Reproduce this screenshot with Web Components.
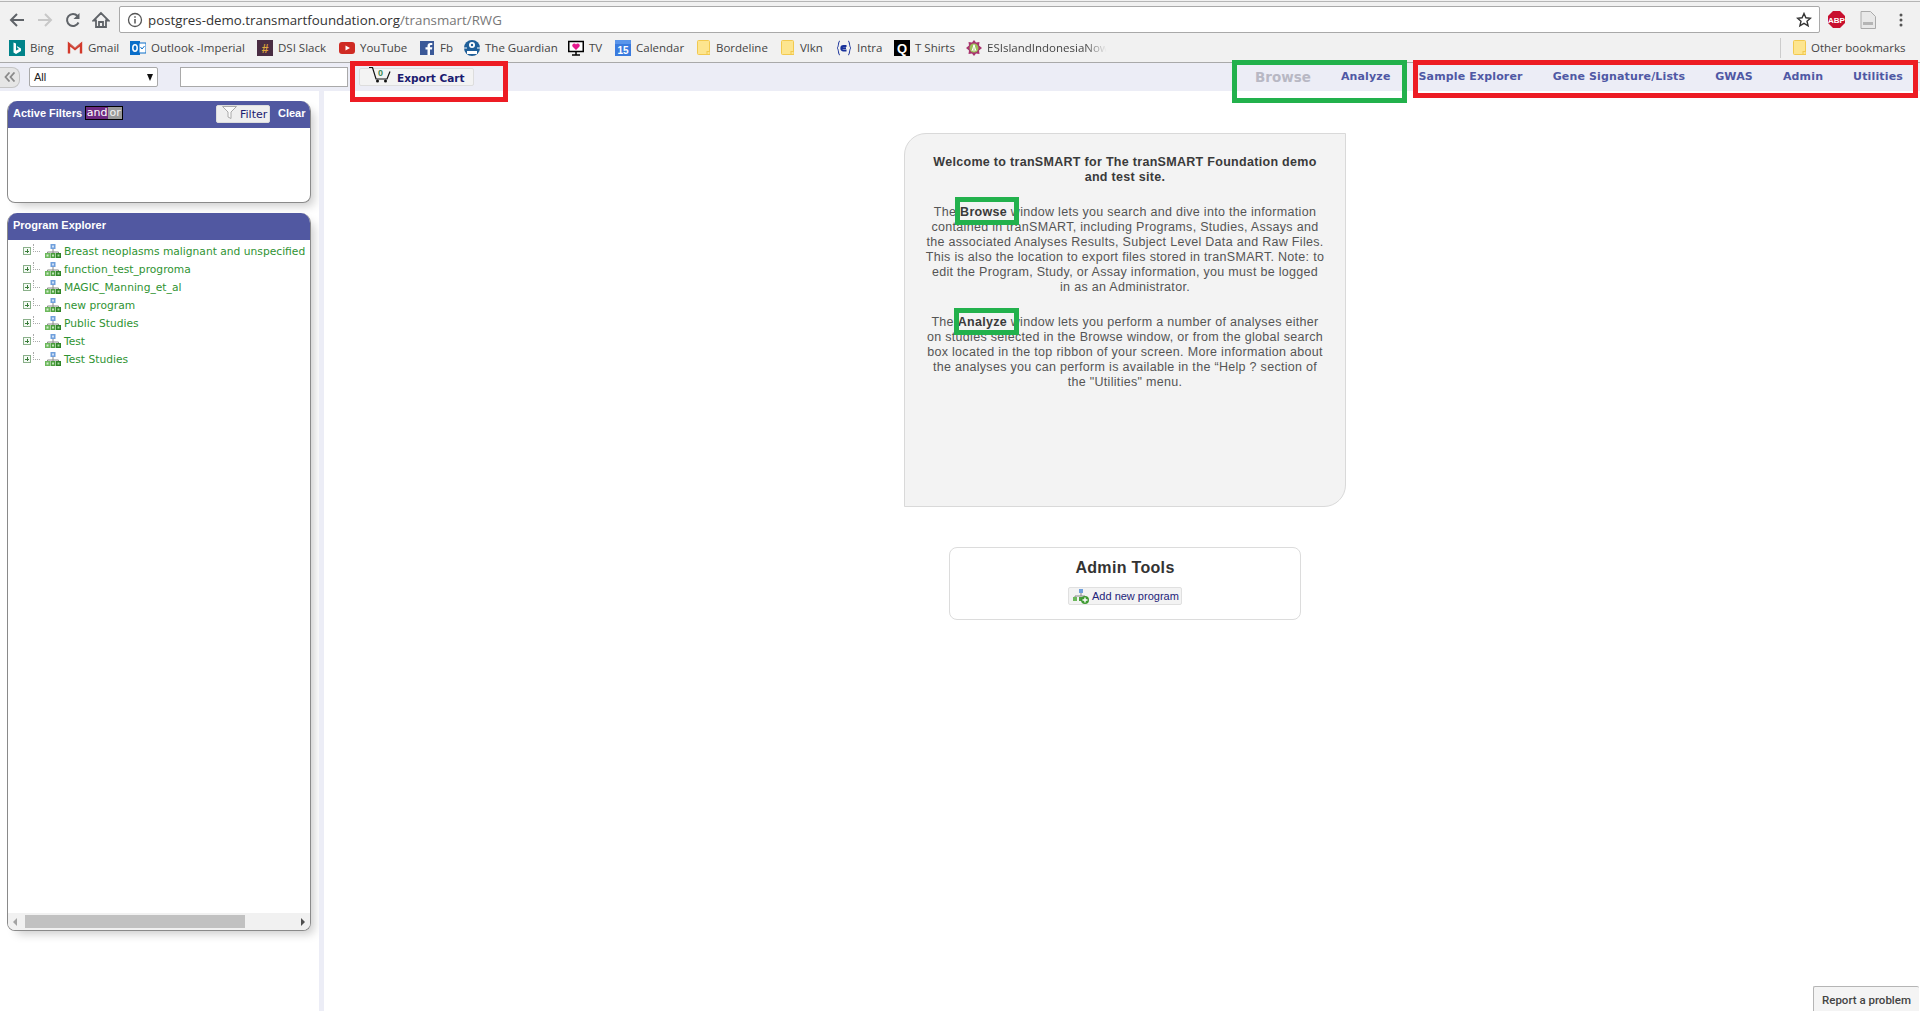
<!DOCTYPE html>
<html>
<head>
<meta charset="utf-8">
<title>tranSMART</title>
<style>
  html, body { margin: 0; padding: 0; background: #fff; }
  body { width: 1926px; height: 1011px; overflow: hidden; font-family: "Liberation Sans", Arial, sans-serif; }
  svg { display: block; }
</style>
</head>
<body>
<app-page></app-page>

<script>
// small helper, every element just renders a string into its open shadow root
class Base extends HTMLElement {
  constructor() {
    super();
    this.attachShadow({ mode: 'open' });
    this.shadowRoot.innerHTML = this.render();
  }
  render() { return '<slot></slot>'; }
}

const hierarchy = `
<svg width="16" height="14" viewBox="0 0 16 14">
  <rect x="5.5" y="0" width="5" height="5" fill="#6f9fdc"/><rect x="7" y="1.500" width="2" height="2" fill="#cfe0f5"/>
  <path d="M8 5v3M2.500 9.500v-1.500h11v1.500M8 8v1.500" stroke="#888" fill="none"/>
  <rect x="0" y="9" width="5" height="5" fill="#6cb85c"/><rect x="1.500" y="10.500" width="2" height="2" fill="#d5edcf"/>
  <rect x="5.500" y="9" width="5" height="5" fill="#4a9e3c"/><rect x="7" y="10.500" width="2" height="2" fill="#c4e6bc"/>
  <rect x="11" y="9" width="5" height="5" fill="#2f8427"/><rect x="12.500" y="10.500" width="2" height="2" fill="#a8d8a0"/>
</svg>`;

class BookmarkItem extends Base {
  render() {
    return `<style>
      :host { display: flex; align-items: center; gap: 5px; flex: none; height: 29px; }
      .ic { width: 16px; height: 16px; flex: none; display: flex; justify-content: center; }
      span { font: 11.500px "Open Sans", sans-serif; color: #444; white-space: nowrap; }
    </style>
    <div class="ic"><slot name="icon"></slot></div><span><slot></slot></span>`;
  }
}
customElements.define('bookmark-item', BookmarkItem);

const folder = `<svg slot="icon" width="13" height="16" viewBox="0 0 13 16"><path d="M.5 1.500a1 1 0 0 1 1-1h10a1 1 0 0 1 1 1v13h-11a1 1 0 0 1-1-1z" fill="#fde58f" stroke="#f2c94f"/><rect x="10" y="11.500" width="3" height="3" fill="#fde58f" stroke="#f2c94f"/></svg>`;

class BrowserChrome extends Base {
  render() {
    return `<style>
      :host { display: block; background: #f1f1f1; }
      .tabs { height: 6px; box-sizing: border-box; padding-top: 1px; }
      .tabs div { height: 1px; background: #b5b5b5; }
      .top { display: flex; align-items: center; height: 27px; }
      .navs { width: 119px; flex: none; display: flex; align-items: center; padding-left: 8px; box-sizing: border-box; gap: 10px; }
      .url { flex: none; width: 1701px; height: 27px; box-sizing: border-box; background: #fff; border: 1px solid #a9a9a9; border-radius: 2px;
             display: flex; align-items: center; padding: 0 7px 0 7px; gap: 5px; font: 13.300px "Open Sans", sans-serif; color: #777; }
      .url b { font-weight: 400; color: #333; }
      .url .txt { flex: 1; white-space: nowrap; }
      .right { flex: 1; display: flex; align-items: center; padding-left: 8px; gap: 15px; }
      .marks { height: 29px; display: flex; align-items: center; padding-left: 9px; box-sizing: border-box; }
      .fade { color: #444; -webkit-mask-image: linear-gradient(to right, #000 80%, transparent 98%); mask-image: linear-gradient(to right, #000 80%, transparent 98%); }
      .sep { width: 1px; height: 20px; background: #ccc; flex: none; }
    </style>
    <div class="tabs"><div></div></div>
    <div class="top">
      <div class="navs">
        <svg width="18" height="18" viewBox="0 0 18 18"><path d="M16 9H3M9 3 3 9l6 6" stroke="#5f6368" stroke-width="2" fill="none"/></svg>
        <svg width="18" height="18" viewBox="0 0 18 18"><path d="M2 9h13M9 3l6 6-6 6" stroke="#c8c8c8" stroke-width="2" fill="none"/></svg>
        <svg width="18" height="18" viewBox="0 0 18 18"><path d="M14.500 11.500A6 6 0 1 1 13.500 5" stroke="#5f6368" stroke-width="2" fill="none"/><path d="M15.500 2v6h-6z" fill="#5f6368"/></svg>
        <svg width="18" height="18" viewBox="0 0 18 18"><path d="M9 2 1.500 9.500H4V16h10V9.500h2.500zM7 15.500V11h4v4.500" stroke="#5f6368" stroke-width="1.800" fill="none"/></svg>
      </div>
      <div class="url">
        <svg width="16" height="16" viewBox="0 0 16 16"><circle cx="8" cy="8" r="6.500" stroke="#555" stroke-width="1.300" fill="none"/><path d="M8 7v4.500M8 4.200v1.500" stroke="#555" stroke-width="1.500"/></svg>
        <span class="txt"><b>postgres-demo.transmartfoundation.org</b>/transmart/RWG</span>
        <svg width="16" height="16" viewBox="0 0 16 16"><path d="m8 1.500 1.900 4.300 4.600.4-3.500 3 1.100 4.600L8 11.400l-4.100 2.400L5 9.200l-3.500-3 4.600-.4z" stroke="#333" stroke-width="1.400" fill="none"/></svg>
      </div>
      <div class="right">
        <svg width="17" height="17" viewBox="0 0 17 17"><path d="M5 0h7l5 5v7l-5 5H5l-5-5V5z" fill="#c8102e"/><text x="8.500" y="11.500" font-family="Liberation Sans" font-weight="700" font-size="8" fill="#fff" text-anchor="middle">ABP</text></svg>
        <svg width="16" height="18" viewBox="0 0 16 18"><path d="M1 .5h9.500l5 5v12H1z" fill="#e8e8e8" stroke="#aaa"/><path d="M3 11h10v3H3z" fill="#b5b5b5"/></svg>
        <svg width="4" height="14" viewBox="0 0 4 14" style="margin-left:8px"><circle cx="2" cy="2" r="1.500" fill="#555"/><circle cx="2" cy="7" r="1.500" fill="#555"/><circle cx="2" cy="12" r="1.500" fill="#555"/></svg>
      </div>
    </div>
    <div class="marks">
      <bookmark-item style="width:58px"><svg slot="icon" width="16" height="16" viewBox="0 0 16 16"><rect width="16" height="16" fill="#00838a"/><path d="M4.500 2.500 7 3.500v7l3-1.500-1.500-1-.8-2L12 8.500v2.500L7 14l-2.500-1.500z" fill="#fff"/></svg>Bing</bookmark-item>
      <bookmark-item style="width:63px"><svg slot="icon" width="16" height="16" viewBox="0 0 16 16"><path d="M2 13.500V4l6 5 6-5v9.500" stroke="#d3392b" stroke-width="2.400" fill="none"/><path d="M3.200 4 8 8l4.800-4" stroke="#bbb" stroke-width=".5" fill="none"/></svg>Gmail</bookmark-item>
      <bookmark-item style="width:127px"><svg slot="icon" width="16" height="16" viewBox="0 0 16 16"><rect x="0" y="1" width="10" height="14" fill="#0a6ec9"/><rect x="9" y="3" width="7" height="10" fill="#fff" stroke="#0a6ec9"/><path d="m10.500 7 1.500 2 2.500-3" stroke="#0a6ec9" fill="none"/><ellipse cx="5" cy="8" rx="2.200" ry="3.200" stroke="#fff" stroke-width="1.500" fill="none"/></svg>Outlook -Imperial</bookmark-item>
      <bookmark-item style="width:82px"><svg slot="icon" width="16" height="16" viewBox="0 0 16 16"><rect width="16" height="16" fill="#4a2d43"/><text x="8" y="12.500" font-family="Liberation Sans" font-weight="700" font-size="12" fill="#e0a83c" text-anchor="middle">#</text></svg>DSI Slack</bookmark-item>
      <bookmark-item style="width:80px"><svg slot="icon" width="16" height="16" viewBox="0 0 16 16"><rect y="2" width="16" height="12" rx="3" fill="#cf2b24"/><path d="m6.500 5.500 4.500 2.500-4.500 2.500z" fill="#fff"/></svg>YouTube</bookmark-item>
      <bookmark-item style="width:45px"><svg slot="icon" width="16" height="16" viewBox="0 0 16 16"><rect x="1" y="1" width="14" height="14" fill="#3b5998"/><path d="M11 15V9.500h2l.3-2.200H11V6c0-.7.300-1.100 1.100-1.100h1.200V3c-.6-.1-1.200-.1-1.800-.1-1.800 0-3 1-3 3v1.400H6.500v2.200h2V15z" fill="#fff"/></svg>Fb</bookmark-item>
      <bookmark-item style="width:104px"><svg slot="icon" width="16" height="16" viewBox="0 0 16 16"><circle cx="8" cy="8" r="8" fill="#1f5f99"/><circle cx="8" cy="5" r="3" fill="#fff"/><path d="M3 11h10v3H3z" fill="#fff"/><path d="M0 8h3M13 8h3" stroke="#fff"/><circle cx="8" cy="5" r="1.200" fill="#1f5f99"/></svg>The Guardian</bookmark-item>
      <bookmark-item style="width:47px"><svg slot="icon" width="16" height="16" viewBox="0 0 16 16"><rect x=".75" y="1.500" width="14.500" height="10" fill="#fff" stroke="#000" stroke-width="1.500"/><path d="M8 10 4.500 6.500a2 2 0 0 1 3.500-2 2 2 0 0 1 3.500 2z" fill="#e5188d"/><path d="M4 15h8M8 12v3" stroke="#000" stroke-width="1.500"/></svg>TV</bookmark-item>
      <bookmark-item style="width:80px"><svg slot="icon" width="16" height="16" viewBox="0 0 16 16"><rect width="16" height="16" fill="#3a7bde"/><rect y="0" width="16" height="4" fill="#5a95ea"/><text x="8" y="14" font-family="Liberation Sans" font-weight="700" font-size="10" fill="#fff" text-anchor="middle">15</text></svg>Calendar</bookmark-item>
      <bookmark-item style="width:84px">${folder}Bordeline</bookmark-item>
      <bookmark-item style="width:57px">${folder}Vlkn</bookmark-item>
      <bookmark-item style="width:58px"><svg slot="icon" width="16" height="16" viewBox="0 0 16 16"><path d="M4 1C2 1 3 7 1 8c2 1 1 7 3 7M12 1c2 0 1 6 3 7-2 1-1 7-3 7" stroke="#17309a" fill="none"/><path d="M10.500 6h-3a2.200 2.200 0 0 0 0 4.500h3M6 8.200h4" stroke="#17309a" stroke-width="1.800" fill="none"/></svg>Intra</bookmark-item>
      <bookmark-item style="width:72px"><svg slot="icon" width="16" height="16" viewBox="0 0 16 16"><rect width="16" height="16" fill="#000"/><text x="8" y="13" font-family="Liberation Sans" font-weight="700" font-size="13" fill="#fff" text-anchor="middle">Q</text></svg>T Shirts</bookmark-item>
      <bookmark-item style="width:814px"><svg slot="icon" width="16" height="16" viewBox="0 0 16 16"><path d="m8 0 2 2.500L13.500 2 13 5.500 16 8l-3 2.500.5 3.500-3.500-.5L8 16l-2-2.500-3.500.5.500-3.500L0 8l3-2.500L2.500 2 6 2.500z" fill="#a8336e"/><circle cx="8" cy="8" r="4.500" fill="#9bbf5a"/><path d="M8 4.500v7M6 11l2-6 2 6" stroke="#fff" fill="none"/></svg><div class="fade">ESIslandIndonesiaNow</div></bookmark-item>
      <div class="sep"></div>
      <bookmark-item style="margin-left:10px;gap:4px">${folder}Other bookmarks</bookmark-item>
    </div>`;
  }
}
customElements.define('browser-chrome', BrowserChrome);

class NavLink extends Base {
  render() {
    return `<style>
      :host { font: 700 11px "DejaVu Sans", Verdana, sans-serif; letter-spacing: .15px; color: #4f58a4; white-space: nowrap; display: block; }
      :host([off]) { font-size: 13.500px; letter-spacing: 0; color: #b8b8c4; position: relative; top: 1px; }
    </style><slot></slot>`;
  }
}
customElements.define('nav-link', NavLink);

class AppToolbar extends Base {
  render() {
    return `<style>
      :host { display: flex; align-items: center; height: 29px; background: #ecedf6; border-top: 1px solid #a9a9a9; box-sizing: border-box; }
      .collapse { width: 20px; height: 21px; box-sizing: border-box; background: #e6e6e6; border: 1px solid #c4c4c4; border-left: 0; border-radius: 0 8px 8px 0; display: flex; align-items: center; justify-content: center; flex: none; }
      .sel { margin-left: 9px; width: 129px; height: 20px; box-sizing: border-box; background: #fff; border: 1px solid #a9a9a9; border-radius: 2px; display: flex; align-items: center; justify-content: space-between;
             padding: 0 4px 0 4px; font: 11px "Liberation Sans", sans-serif; color: #222; flex: none; }
      .sel i { border: 3.500px solid transparent; border-top: 7px solid #111; border-bottom: 0; }
      input { margin: 0 0 0 22px; width: 168px; height: 20px; box-sizing: border-box; border: 1px solid #a9a9a9; background: #fff; padding: 0; flex: none; }
      .cart { margin-left: 11px; width: 115px; height: 18px; box-sizing: border-box; background: #f3f3f3; border: 1px solid #ddd; border-radius: 2px; display: flex; align-items: center;
              padding-left: 9px; gap: 5px; font: 700 10.500px "DejaVu Sans", Verdana, sans-serif; color: #1b1b6f; flex: none; }
      .cart span { padding-top: 2px; }
      nav { margin-left: auto; display: flex; align-items: center; gap: 30px; padding: 0 17px 2px 0; }
    </style>
    <div class="collapse"><svg width="12" height="10" viewBox="0 0 12 10"><path d="M5.500 .5 1.500 5l4 4.500M10.500 .5 6.500 5l4 4.500" stroke="#8a8a8a" stroke-width="1.800" fill="none"/></svg></div>
    <div class="sel">All<i></i></div>
    <input type="text">
    <div class="cart">
      <svg width="23" height="16" viewBox="0 0 23 16" style="margin-top:-5px"><path d="M0 .5h3.500L7 12h11l3-7.500" stroke="#111" stroke-width="1.200" fill="none"/><circle cx="8.500" cy="14" r="1.500" fill="#111"/><circle cx="16.500" cy="14" r="1.500" fill="#111"/><text x="9" y="9" font-family="Liberation Sans" font-size="9" fill="#3c8a52">0</text></svg>
      <span>Export Cart</span>
    </div>
    <nav>
      <nav-link off>Browse</nav-link>
      <nav-link>Analyze</nav-link>
      <nav-link style="margin-left:-2px">Sample Explorer</nav-link>
      <nav-link>Gene Signature/Lists</nav-link>
      <nav-link>GWAS</nav-link>
      <nav-link>Admin</nav-link>
      <nav-link>Utilities</nav-link>
    </nav>`;
  }
}
customElements.define('app-toolbar', AppToolbar);

class SidePanel extends Base {
  render() {
    return `<style>
      :host { display: flex; flex-direction: column; box-sizing: border-box; background: #fff; border: 1px solid #8a8a8a; border-top: 0; border-radius: 10px 10px 8px 8px; box-shadow: 6px 6px 10px -3px #ccc; overflow: hidden; }
      header { height: 27px; box-sizing: border-box; background: #5158a1; color: #fff; font: 700 11px "Liberation Sans", sans-serif; display: flex; align-items: center; padding: 0 5px 1px 6px; margin: 0 -1px; flex: none; }
      .title { position: relative; top: -1px; }
      .body { flex: 1; min-height: 0; display: flex; flex-direction: column; }
      .extra { flex: 1; display: flex; align-items: center; }
    </style>
    <header><span class="title"><slot name="title"></slot></span><div class="extra"><slot name="extra"></slot></div></header>
    <div class="body"><slot></slot></div>`;
  }
}
customElements.define('side-panel', SidePanel);

class FilterControls extends Base {
  render() {
    return `<style>
      :host { display: flex; align-items: center; flex: 1; font: 700 11px "Liberation Sans", sans-serif; }
      .mode { display: flex; margin-left: 3px; border: 1px solid #000; font: 400 11px "DejaVu Sans", sans-serif; height: 12px; line-height: 12px; margin-top: -2px; }
      .and { background: #6d2a82; color: #fff; width: 22px; text-align: center; }
      .or { background: #9a9a9a; color: #f4f4f4; width: 14px; text-align: center; }
      .btn { margin-left: auto; width: 54px; height: 18px; box-sizing: border-box; background: #efefef; border: 1px solid #ddd; border-radius: 2px; display: flex; align-items: center; gap: 3px; padding-left: 5px; font: 400 11px "DejaVu Sans", sans-serif; color: #1b1b6f; }
      .clear { margin-left: 8px; width: 28px; position: relative; top: -1px; }
    </style>
    <div class="mode"><div class="and">and</div><div class="or">or</div></div>
    <div class="btn"><svg width="15" height="13" viewBox="0 0 15 13" style="margin-top:-3px"><path d="M.5.5h14L9 6v6.500L6 11V6z" fill="#fafafa" stroke="#aaa"/></svg><span>Filter</span></div>
    <div class="clear">Clear</div>`;
  }
}
customElements.define('filter-controls', FilterControls);

class TreeItem extends Base {
  render() {
    return `<style>
      :host { display: flex; align-items: center; height: 18px; padding-left: 15px; font: 10.700px "DejaVu Sans", Verdana, sans-serif; color: #2f9332; white-space: nowrap; }
      .box { width: 8px; height: 8px; box-sizing: border-box; border: 1px solid #8ab08a; position: relative; flex: none; background: #f4faf4; }
      .box::before { content: ""; position: absolute; left: 1px; top: 2.500px; width: 4px; height: 1px; background: #3a7d3a; }
      .box::after { content: ""; position: absolute; left: 2.500px; top: 1px; width: 1px; height: 4px; background: #3a7d3a; }
      .dots { width: 6px; height: 7px; margin: -7px 5px 0 2px; border-bottom: 1px dotted #aaa; border-left: 1px dotted #aaa; flex: none; }
      svg { flex: none; margin-right: 3px; margin-top: -1px; }
    </style>
    <div class="box"></div><div class="dots"></div>${hierarchy}<slot></slot>`;
  }
}
customElements.define('tree-item', TreeItem);

class HScroll extends Base {
  render() {
    return `<style>
      :host { display: flex; align-items: center; height: 17px; background: #f1f1f1; flex: none; margin-top: auto; padding: 0 5px; box-sizing: border-box; }
      .a { border: 4px solid transparent; flex: none; }
      .l { border-right: 4px solid #a3a3a3; border-left: 0; }
      .r { border-left: 4px solid #505050; border-right: 0; margin-left: auto; }
      .t { width: 220px; height: 13px; background: #c1c1c1; margin-left: 8px; }
    </style><div class="a l"></div><div class="t"></div><div class="a r"></div>`;
  }
}
customElements.define('h-scroll', HScroll);

class WelcomeCard extends Base {
  render() {
    return `<style>
      :host { display: block; width: 442px; height: 374px; box-sizing: border-box; background: #f3f3f3; border: 1px solid #d9d9d9; border-radius: 22px 0 22px 0; padding: 21px 10px 0; text-align: center;
              font: 12.500px/15px "Liberation Sans", Arial, sans-serif; color: #555; letter-spacing: .3px; position: relative; }
      h4 { margin: 0 0 20px; font: inherit; font-weight: 700; color: #3a3a3a; }
      p { margin: 0 0 20px; }
      b { color: #3a3a3a; }
    </style>
    <h4>Welcome to tranSMART for The tranSMART Foundation demo<br>and test site.</h4>
    <p>The <b>Browse</b> window lets you search and dive into the information<br>contained in tranSMART, including Programs, Studies, Assays and<br>the associated Analyses Results, Subject Level Data and Raw Files.<br>This is also the location to export files stored in tranSMART. Note: to<br>edit the Program, Study, or Assay information, you must be logged<br>in as an Administrator.</p>
    <p>The <b>Analyze</b> window lets you perform a number of analyses either<br>on studies selected in the Browse window, or from the global search<br>box located in the top ribbon of your screen. More information about<br>the analyses you can perform is available in the “Help ? section of<br>the "Utilities" menu.</p>
    <slot></slot>`;
  }
}
customElements.define('welcome-card', WelcomeCard);

class AdminTools extends Base {
  render() {
    return `<style>
      :host { display: flex; flex-direction: column; align-items: center; width: 352px; height: 73px; box-sizing: border-box; border: 1px solid #dcdcdc; border-radius: 8px; background: #fff; padding-top: 10px; color: #333; }
      h3 { margin: 0; font: 700 16px/20px "Liberation Sans", sans-serif; letter-spacing: .32px; }
      .btn { margin-top: 9px; height: 18px; width: 114px; box-sizing: border-box; background: #f3f3f3; border: 1px solid #e0e0e0; border-radius: 2px; display: flex; align-items: center; gap: 3px; padding-left: 4px; font: 11px "Liberation Sans", sans-serif; color: #23237a; white-space: nowrap; }
    </style>
    <h3>Admin Tools</h3>
    <div class="btn">
      <svg width="16" height="15" viewBox="0 0 16 15"><rect x="6" y="0" width="4" height="4" fill="#6f9fdc"/><path d="M8 4v3M2 9V7h10v2" stroke="#888" fill="none"/><rect x="0" y="8" width="4" height="4" fill="#6cb85c"/><rect x="6" y="8" width="4" height="4" fill="#4a9e3c"/><circle cx="12" cy="11" r="4" fill="#3f9a32"/><path d="M12 8.500v5M9.500 11h5" stroke="#fff" stroke-width="1.400"/></svg>
      Add new program
    </div>`;
  }
}
customElements.define('admin-tools', AdminTools);

// the coloured annotation rectangles sit on top of the page
class MarkBox extends Base {
  render() {
    const g = (this.getAttribute('box') || '0 0 0 0').split(' ');
    const c = this.getAttribute('tone') === 'green' ? '#22b14c' : '#ed1c24';
    return `<style>
      :host { display: block; position: absolute; left: ${g[0]}px; top: ${g[1]}px; width: ${g[2]}px; height: ${g[3]}px; box-sizing: border-box; border: 5px solid ${c}; }
    </style>`;
  }
}
customElements.define('mark-box', MarkBox);

class ReportProblem extends Base {
  render() {
    return `<style>
      :host { display: block; position: absolute; left: 1813px; top: 986px; width: 106px; height: 25px; box-sizing: border-box; background: #f4f4f4; border: 1px solid #b5b5b5; border-bottom: 0; border-right: 0; border-radius: 2px 2px 0 0;
              font: 500 11.500px/26px Roboto, sans-serif; color: #444; padding-left: 8px; white-space: nowrap; }
    </style>Report a problem`;
  }
}
customElements.define('report-problem', ReportProblem);

class AppPage extends Base {
  render() {
    return `<style>
      :host { display: block; width: 1926px; height: 1011px; position: relative; overflow: hidden; }
      .app { width: 1920px; }
      .row { display: flex; height: 920px; }
      aside { width: 319px; box-sizing: border-box; padding: 10px 8px 0 7px; flex: none; display: flex; flex-direction: column; gap: 10px; }
      .strip { width: 5px; background: #ecedf6; flex: none; }
      side-panel.a { height: 102px; }
      side-panel.b { height: 718px; }
      .tree { padding-top: 2px; display: flex; flex-direction: column; }
      main { flex: 1; display: flex; flex-direction: column; align-items: center; padding: 42px 0 0 6px; gap: 40px; }
    </style>
    <div class="app">
      <browser-chrome></browser-chrome>
      <app-toolbar></app-toolbar>
      <div class="row">
        <aside>
          <side-panel class="a"><span slot="title">Active Filters</span><filter-controls slot="extra"></filter-controls></side-panel>
          <side-panel class="b"><span slot="title">Program Explorer</span>
            <div class="tree">
              <tree-item>Breast neoplasms malignant and unspecified</tree-item>
              <tree-item>function_test_progroma</tree-item>
              <tree-item>MAGIC_Manning_et_al</tree-item>
              <tree-item>new program</tree-item>
              <tree-item>Public Studies</tree-item>
              <tree-item>Test</tree-item>
              <tree-item>Test Studies</tree-item>
            </div>
            <h-scroll></h-scroll>
          </side-panel>
        </aside>
        <div class="strip"></div>
        <main>
          <welcome-card></welcome-card>
          <admin-tools></admin-tools>
        </main>
      </div>
    </div>
    <mark-box box="350 61 158 41"></mark-box>
    <mark-box tone="green" box="1232 60 175 43"></mark-box>
    <mark-box box="1413 60 505 38"></mark-box>
    <mark-box tone="green" box="955 197 64 28"></mark-box>
    <mark-box tone="green" box="954 308 65 27"></mark-box>
    <report-problem></report-problem>`;
  }
}
customElements.define('app-page', AppPage);
</script>
</body>
</html>
